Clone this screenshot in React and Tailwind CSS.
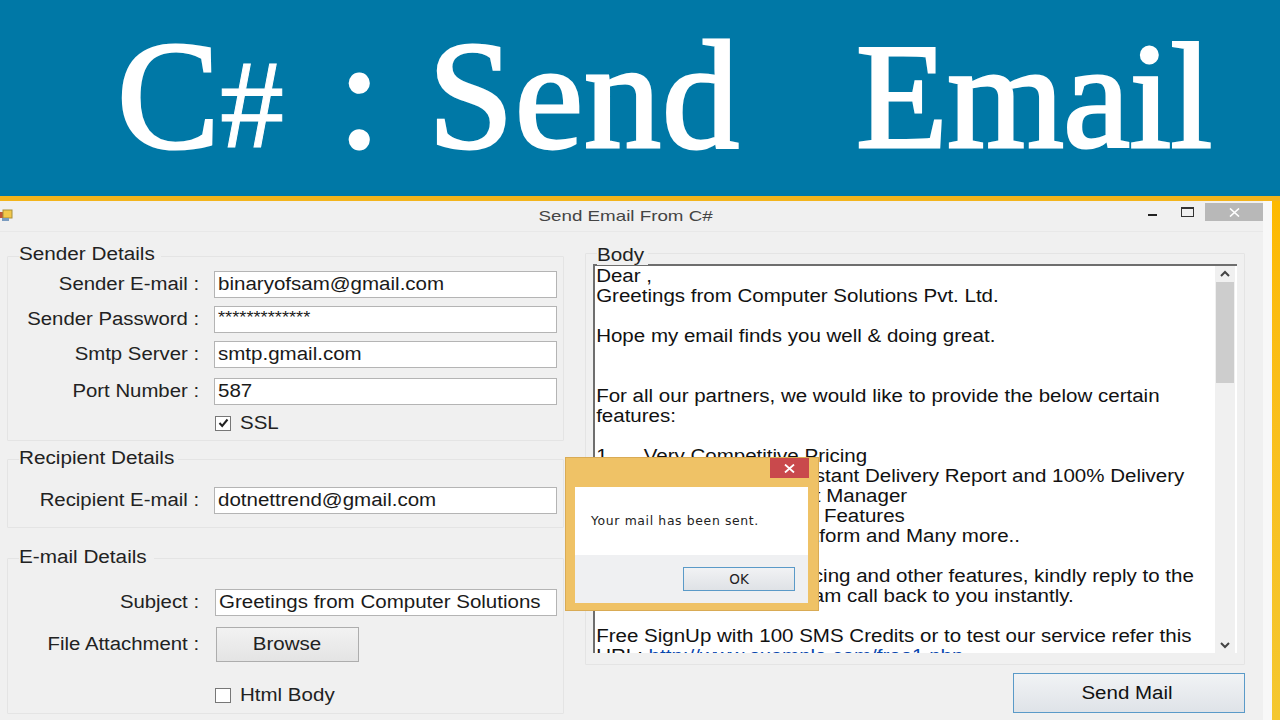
const sans = "font-['Liberation_Sans',Arial,sans-serif]";

function WL({ children }) {
  return <span className="inline-block whitespace-pre scale-x-[1.14] origin-left">{children}</span>;
}
function WR({ children }) {
  return <span className="inline-block whitespace-pre scale-x-[1.13] origin-right">{children}</span>;
}
function WC({ children }) {
  return <span className="inline-block whitespace-pre scale-x-[1.14] origin-center">{children}</span>;
}

function Row({ label, value, mt = "", inputClass = "ml-[15px] w-[343px]" }) {
  return (
    <div className={`flex items-center ${mt}`}>
      <div className="w-[191px] shrink-0 text-right text-[#222] leading-[20px] -mt-[2px]"><WR>{label}</WR></div>
      <div className={`h-[27px] bg-white border border-[#b4b4b4] pl-[3px] flex items-center text-[#1a1a1a] whitespace-nowrap overflow-hidden ${inputClass}`}><WL>{value}</WL></div>
    </div>
  );
}

function Group({ title, className = "", legendClass = "top-[-12px] pr-[24px]", children }) {
  return (
    <div className={`relative border border-[#e4e4e4] rounded-[1px] ${className}`}>
      <span className={`absolute left-[11px] bg-[#f0f0f0] leading-[20px] text-[#222] ${legendClass}`}><span className="inline-block whitespace-pre scale-x-[1.15] origin-left">{title}</span></span>
      {children}
    </div>
  );
}

function Check({ checked, label, className = "" }) {
  return (
    <div className={`flex items-center ${className}`}>
      <div className="w-[16px] h-[15px] border border-[#777] bg-white flex items-center justify-center">
        {checked && (
          <svg width="11" height="10" viewBox="0 0 11 10"><path d="M1.5 5 L4.2 8 L9.5 1.5" fill="none" stroke="#222" strokeWidth="2" /></svg>
        )}
      </div>
      <span className="ml-[9px] text-[#222] leading-[20px]"><WL>{label}</WL></span>
    </div>
  );
}

function L({ children }) {
  return <div className="h-[20px] leading-[20px] whitespace-pre">{children || " "}</div>;
}
function N({ n, children }) {
  return <div className="h-[20px] leading-[20px] whitespace-pre flex"><span className="w-[41.7px] shrink-0">{n}</span><span>{children}</span></div>;
}

export default function App() {
  return (
    <div className={`w-[1280px] h-[720px] overflow-hidden flex flex-col bg-[#f0f0f0] ${sans} text-[18px] relative`}>
      <div className="h-[196px] shrink-0 bg-[#0078a6] flex items-baseline pt-[18px] overflow-hidden font-['Liberation_Serif',serif] text-white text-[154px] leading-[154px] whitespace-pre [-webkit-text-stroke:3px_white]">
        <span className="ml-[117px] w-[103px]">C</span>
        <span className="ml-[0px] w-[66px] text-[128px] [-webkit-text-stroke:1px_white]">#</span>
        <span className="ml-[52px] w-[44px]">:</span>
        <span className="ml-[46px] w-[428px] tracking-[1px]">Send</span>
        <span className="text-[150px] tracking-[-0.5px]">Email</span>
      </div>
      <div className="h-[5px] shrink-0 bg-[#f3b41b]" />
      <div className="flex-1 flex min-h-0">
        <div className="w-[1263px] shrink-0 flex flex-col min-w-0">
          <div className="h-[31px] shrink-0 relative flex items-center justify-center border-b border-[#e8e8e8]">
            <span className="text-[15px] text-[#444] scale-x-[1.25] mt-[1px] ml-[-11px]">Send Email From C#</span>
            <svg className="absolute left-0 top-[8px]" width="13" height="14" viewBox="0 0 13 14">
              <rect x="0" y="3" width="4" height="6" fill="#c0563a" />
              <rect x="3" y="1" width="9" height="8" fill="#f2c84b" stroke="#a88f3a" />
              <rect x="2" y="9" width="7" height="3" fill="#7a9cc0" />
            </svg>
            <div className="absolute left-[1148px] top-[13px] w-[9px] h-[2px] bg-[#222]" />
            <div className="absolute left-[1181px] top-[6px] w-[13px] h-[10px] border border-[#333] border-t-2" />
            <div className="absolute left-[1205px] top-[2px] w-[58px] h-[18px] bg-[#b8b8b8] flex items-center justify-center">
              <svg width="11" height="9" viewBox="0 0 11 9"><path d="M1 0.5 L10 8.5 M10 0.5 L1 8.5" stroke="#fff" strokeWidth="1.6" /></svg>
            </div>
          </div>
          <div className="flex-1 flex min-h-0 pl-[7px]">
            <div className="w-[557px] shrink-0 pt-[24px]">
              <Group title="Sender Details" legendClass="top-[-13px] pr-[24px]" className="h-[185px] pt-[14px]">
                <Row label="Sender E-mail :" value="binaryofsam@gmail.com" />
                <Row label="Sender Password :" value={<span className="text-[16px] relative -top-[2px]">*************</span>} mt="mt-[8px]" />
                <Row label="Smtp Server :" value="smtp.gmail.com" mt="mt-[8px]" />
                <Row label="Port Number :" value="587" mt="mt-[10px]" />
                <Check checked label="SSL" className="ml-[207px] mt-[8px]" />
              </Group>
              <Group title="Recipient Details" className="h-[69px] mt-[18px] pt-[27px]">
                <Row label="Recipient E-mail :" value="dotnettrend@gmail.com" />
              </Group>
              <Group title="E-mail Details" className="h-[156px] mt-[30px] pt-[30px]">
                <Row label="Subject :" value="Greetings from Computer Solutions" inputClass="ml-[16px] w-[342px]" />
                <div className="flex items-center mt-[11px]">
                  <div className="w-[191px] text-right text-[#222] leading-[20px] -mt-[1px]"><WR>File Attachment :</WR></div>
                  <button className="ml-[17px] w-[143px] h-[35px] border border-[#adadad] bg-gradient-to-b from-[#f2f2f2] to-[#e4e4e4] text-[#222]"><WC>Browse</WC></button>
                </div>
                <Check label="Html Body" className="ml-[207px] mt-[23px]" />
              </Group>
            </div>
            <div className="w-[660px] shrink-0 ml-[21px] pt-[21px]">
              <Group title="Body" legendClass="top-[-9px] pr-[10px]" className="h-[412px] pl-[7px] pr-[8px] pt-[10px]">
                <div className="h-[389px] w-[644px] bg-white border-t-2 border-l-2 border-[#6e6e6e] flex text-[#111]">
                  <div className="w-[620px] shrink-0 overflow-hidden">
                    <div className="w-[540px] scale-x-[1.14] origin-left pl-[1px]">
                      <L>Dear ,</L>
                      <L>Greetings from Computer Solutions Pvt. Ltd.</L>
                      <L />
                      <L>Hope my email finds you well &amp; doing great.</L>
                      <L />
                      <L />
                      <L>For all our partners, we would like to provide the below certain</L>
                      <L>features:</L>
                      <L />
                      <N n="1.">Very Competitive Pricing</N>
                      <N n="2.">Top Speed SMS Instant Delivery Report and 100% Delivery</N>
                      <N n="3.">Dedicated  Account Manager</N>
                      <N n="4.">Plenty of  Excellent Features</N>
                      <N n="5.">A User-friendly Platform and Many more..</N>
                      <L />
                      <L>For  more  details on pricing and other features, kindly reply to the</L>
                      <L>mail and let our sales team call back to you instantly.</L>
                      <L />
                      <L>Free SignUp with 100 SMS Credits or to test our service refer this</L>
                      <L>URL: <span className="text-[#0645ad] underline">http://www.example.com/free1.php</span></L>
                    </div>
                  </div>
                  <div className="w-[20px] shrink-0 bg-[#f0f0f0] flex flex-col items-center">
                    <svg className="mt-[4px]" width="10" height="8" viewBox="0 0 10 8"><path d="M1 6 L5 2 L9 6" fill="none" stroke="#444" strokeWidth="2" /></svg>
                    <div className="w-[18px] h-[101px] bg-[#cdcdcd] mt-[4px]" />
                    <div className="flex-1" />
                    <svg className="mb-[4px]" width="10" height="8" viewBox="0 0 10 8"><path d="M1 2 L5 6 L9 2" fill="none" stroke="#444" strokeWidth="2" /></svg>
                  </div>
                </div>
              </Group>
              <div className="flex justify-end mt-[8px]">
                <button className="w-[232px] h-[40px] pr-[4px] border border-[#5a9ac8] bg-gradient-to-b from-[#f1f3f5] to-[#dfe3e8] text-[#111]"><WC>Send Mail</WC></button>
              </div>
            </div>
          </div>
        </div>
        <div className="w-[9px] shrink-0 bg-[#f8f8f8]" />
        <div className="w-[8px] shrink-0 bg-gradient-to-b from-[#fdb900] to-[#f4c72f]" />
      </div>

      <div className="absolute left-[565px] top-[457px] w-[254px] h-[154px] bg-[#efc266] border border-[#d9ab55] flex flex-col font-['DejaVu_Sans',sans-serif]">
        <div className="h-[29px] shrink-0 flex justify-end pr-[9px]">
          <div className="w-[39px] h-[20px] bg-[#c9494c] flex items-center justify-center">
            <svg width="11" height="9" viewBox="0 0 11 9"><path d="M1 0.5 L10 8.5 M10 0.5 L1 8.5" stroke="#fff" strokeWidth="1.8" /></svg>
          </div>
        </div>
        <div className="mx-[9px] w-[233px] h-[116px] flex flex-col">
          <div className="h-[68px] bg-white flex items-center pl-[16px] text-[12.4px] tracking-[0.65px] text-[#222]">Your mail has been sent.</div>
          <div className="flex-1 bg-[#eff0f2] flex justify-end items-start pr-[13px] pt-[12px]">
            <button className="w-[112px] h-[24px] border border-[#5a9ac8] bg-gradient-to-b from-[#f1f2f4] to-[#dfe2e6] text-[13.5px] text-[#222]">OK</button>
          </div>
        </div>
      </div>
    </div>
  );
}
